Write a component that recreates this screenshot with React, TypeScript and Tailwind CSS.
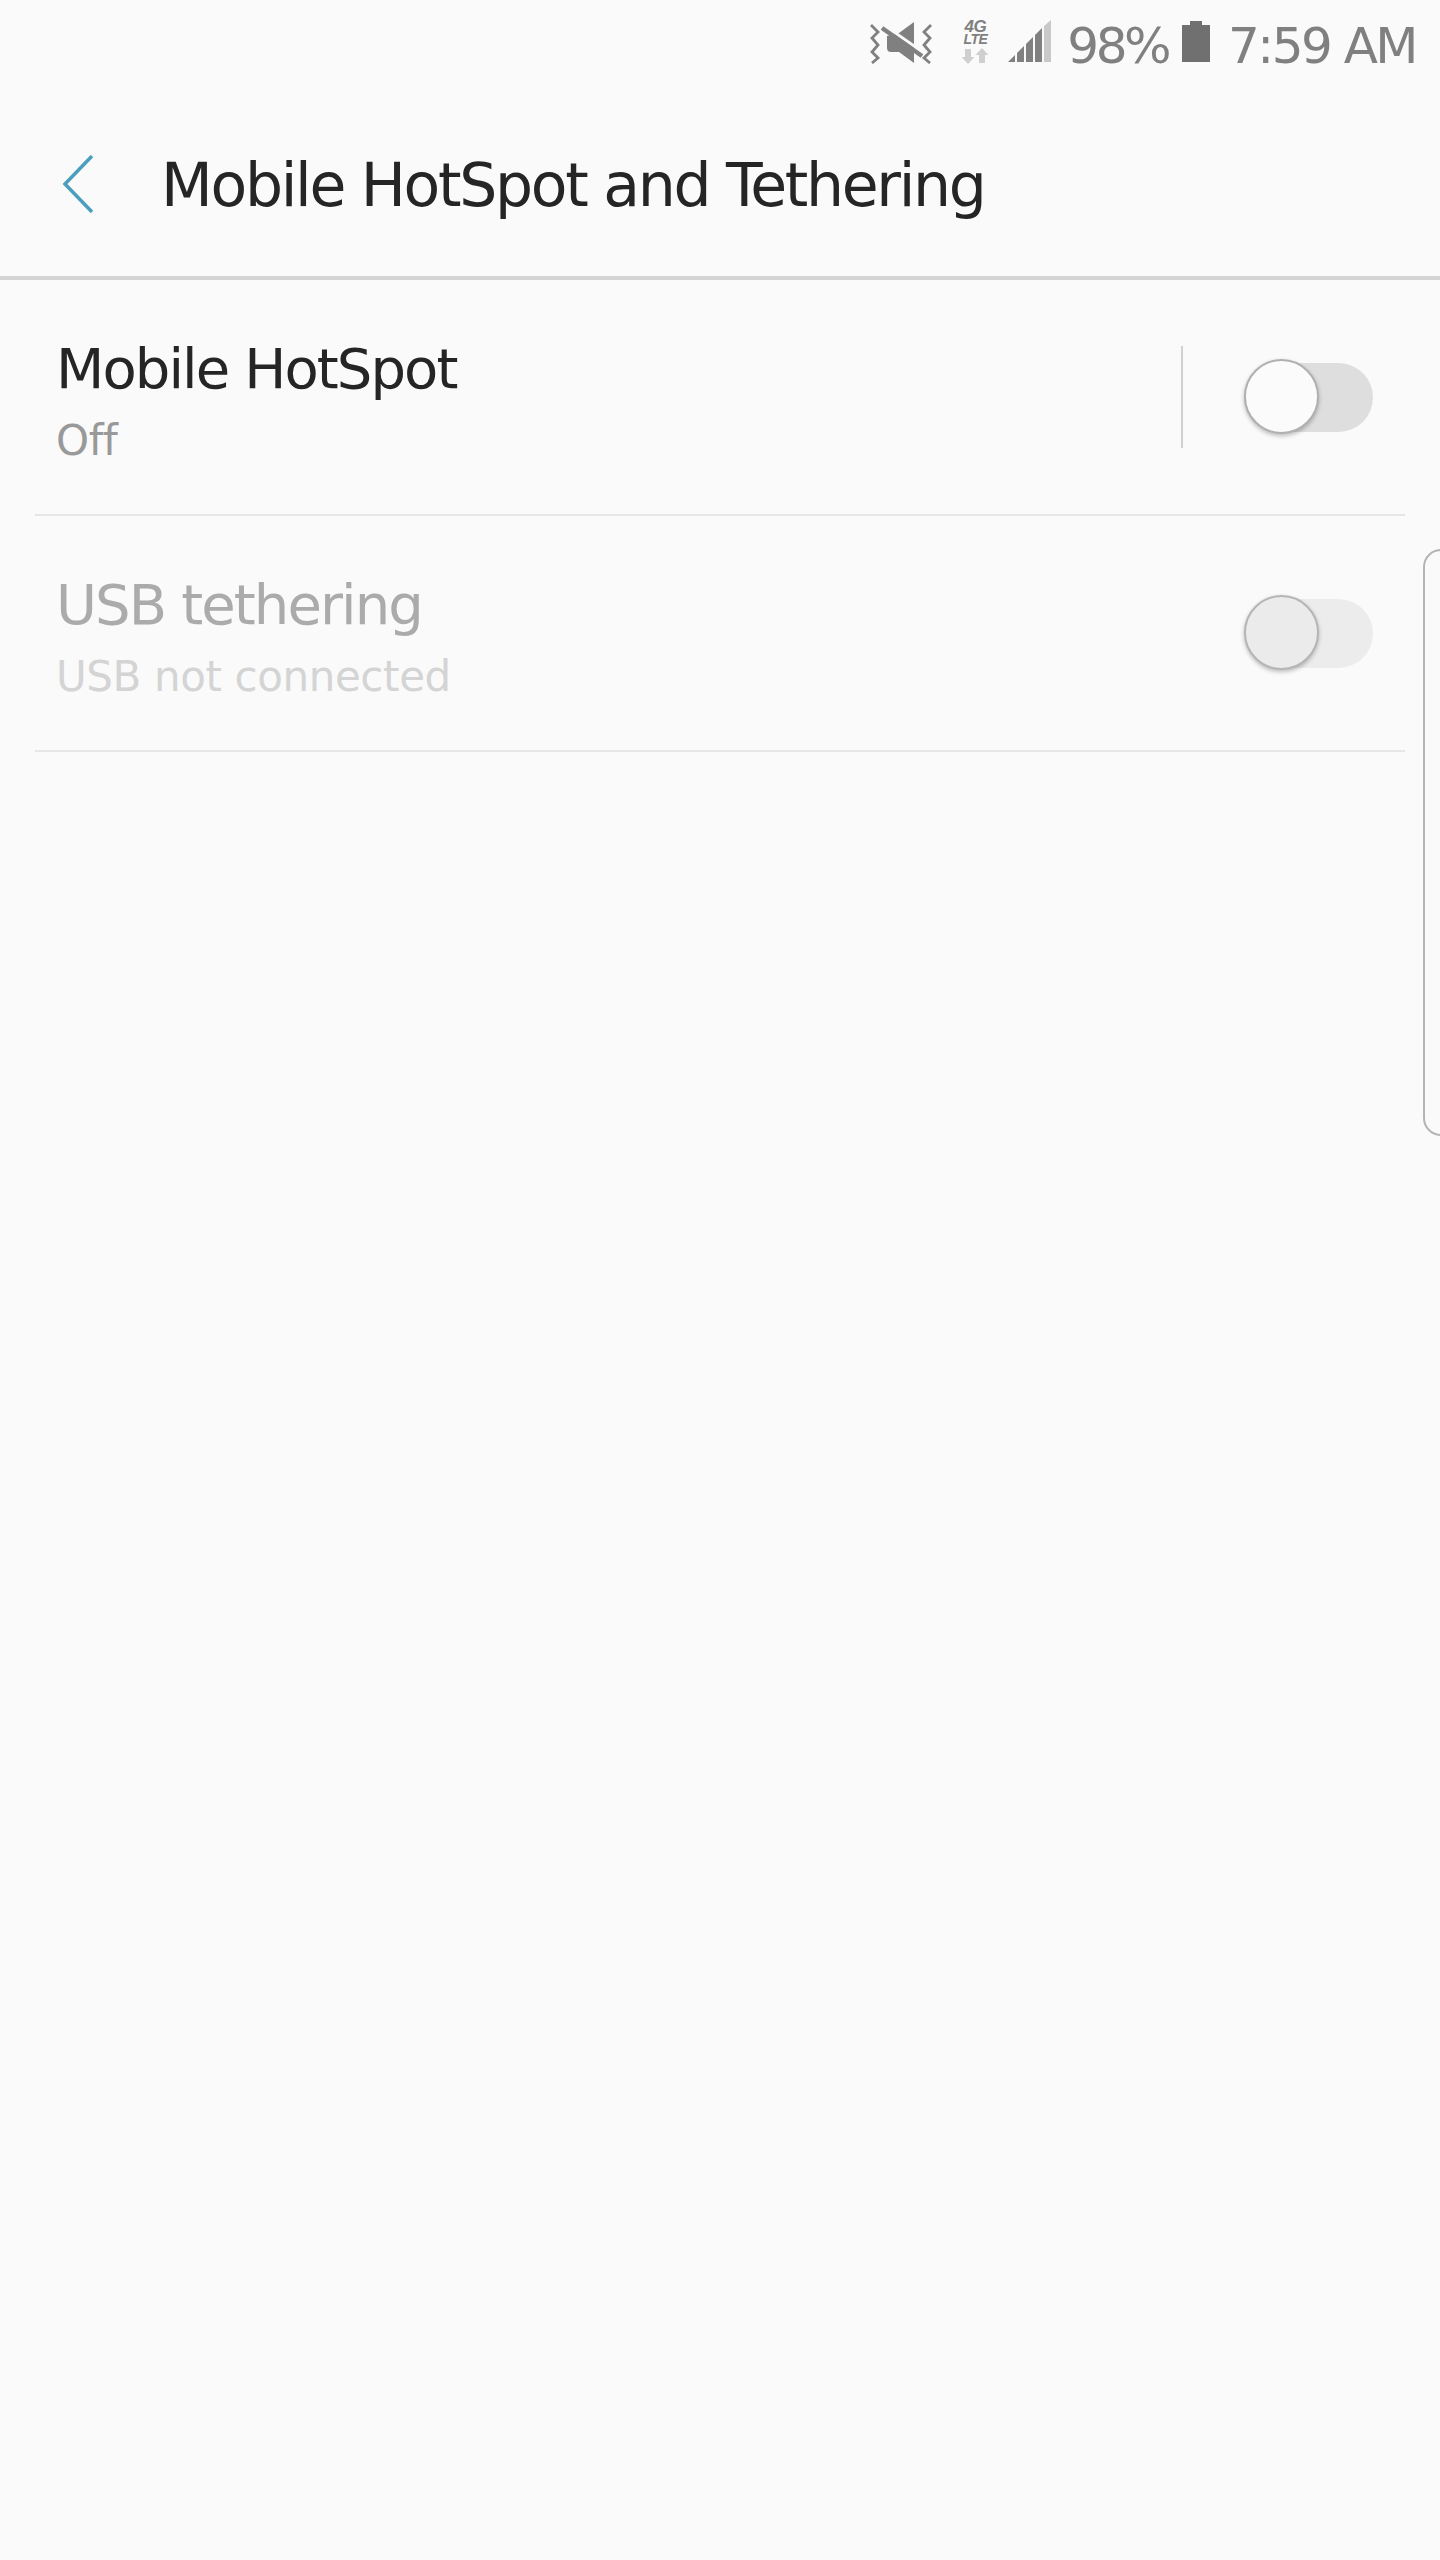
const FONT = "font-['DejaVu_Sans',sans-serif]";

function MuteIcon() {
  return (
    <svg width="64" height="42" viewBox="0 0 64 42" fill="none">
      <path d="M2 3l7 7-6 6 6 7-6 7 6 6-6 5" stroke="#808080" strokeWidth="2.800" />
      <path d="M62 3l-7 7 6 6-6 7 6 7-6 6 6 5" stroke="#808080" strokeWidth="2.800" />
      <path d="M45 0L30 11 18 14v12q0 4 4 4h8l15 11z" fill="#808080" />
      <path d="M15 3l40 28" stroke="#fafafa" strokeWidth="3" />
      <path d="M13 6l40 28" stroke="#808080" strokeWidth="4.500" />
    </svg>
  );
}

function NetworkIcon() {
  return (
    <div className="flex flex-col items-center w-[26px] h-[44px]">
      <span className="text-[#808080] font-['Liberation_Sans',sans-serif] font-bold italic text-[17px] leading-[12px] tracking-[-0.5px]">4G</span>
      <span className="text-[#808080] font-['Liberation_Sans',sans-serif] font-bold italic text-[14px] leading-[11px] mt-[1px] tracking-[-0.5px]">LTE</span>
      <svg className="mt-[3px]" width="26" height="17" viewBox="0 0 26 17">
        <path d="M3 1h6v8h3.500L6 16-.5 9H3z" fill="#cfcfcf" />
        <path d="M17 15h6V7h3.500L20 0l-6.500 7H17z" fill="#cfcfcf" />
      </svg>
    </div>
  );
}

function SignalIcon() {
  return (
    <svg width="43" height="42" viewBox="0 0 43 42">
      <path d="M0 42l7-7v7z" fill="#808080" />
      <path d="M9 33l7-7v16H9z" fill="#808080" />
      <path d="M18 24l7-7v25h-7z" fill="#808080" />
      <path d="M27 15l7-7v34h-7z" fill="#808080" />
      <path d="M36 6l7-6v42h-7z" fill="#c9c9c9" />
    </svg>
  );
}

function Toggle({ disabled }: { disabled?: boolean }) {
  return (
    <div className={`relative w-[129px] h-[69px] ml-[1px] rounded-full ${disabled ? 'bg-[#ececec]' : 'bg-[#dedede]'}`}>
      <div
        className={`absolute left-0 top-[-4px] w-[75px] h-[75px] rounded-full border-2 shadow-[0_2px_4px_rgba(0,0,0,0.25)] ${
          disabled ? 'bg-[#ebebeb] border-[#b5b5b5]' : 'bg-[#fbfbfb] border-[#b0b0b0]'
        }`}
      />
    </div>
  );
}

function Row({ title, sub, disabled, divider }: { title: string; sub: string; disabled?: boolean; divider?: boolean }) {
  return (
    <div className="h-[236px] mx-[35px] border-b-2 border-[#e6e6e6] flex items-center pl-[21px] pr-[32px]">
      <div className="flex-1 pt-[11px] pb-[2px]">
        <div className={`text-[56px] leading-[64px] tracking-[-1.9px] ${disabled ? 'text-[#ababab]' : 'text-[#252525]'}`}>{title}</div>
        <div className={`text-[42px] leading-[50px] mt-[15px] tracking-[-0.4px] ${disabled ? 'text-[#d4d4d4]' : 'text-[#999999]'}`}>{sub}</div>
      </div>
      {divider && <div className="w-[2px] h-[102px] bg-[#d0d0d0] mr-[60px]" />}
      <Toggle disabled={disabled} />
    </div>
  );
}

export default function App() {
  return (
    <div className={`relative w-[1440px] h-[2560px] overflow-hidden bg-[#fafafa] ${FONT}`}>
      <div className="h-[88px] flex items-start justify-end pt-[20px] pr-[24px] text-[#808080]">
        <div className="mt-[2px] mr-[29px]"><MuteIcon /></div>
        <div className="mt-[1px] mr-[20px]"><NetworkIcon /></div>
        <div className="mr-[16px]"><SignalIcon /></div>
        <span className="text-[50px] leading-[52px] mr-[14px] tracking-[-3.5px]">98%</span>
        <svg className="mt-[1px] mr-[18px]" width="28" height="41" viewBox="0 0 28 41">
          <path d="M0 4h8V0h12v4h8v37H0z" fill="#707070" />
        </svg>
        <span className="text-[50px] leading-[52px] tracking-[-2.500px]">7:59 AM</span>
      </div>

      <div className="h-[192px] border-b-4 border-[#d4d4d4] flex items-center pl-[62px] pt-[3px]">
        <svg width="32" height="58" viewBox="0 0 32 58" fill="none">
          <path d="M30 1L3 29l27 28" stroke="#4a9fbf" strokeWidth="3.500" />
        </svg>
        <h1 className="ml-[67px] mt-[2px] text-[60px] leading-[72px] tracking-[-2.300px] text-[#252525] font-normal">
          Mobile HotSpot and Tethering
        </h1>
      </div>

      <Row title="Mobile HotSpot" sub="Off" divider />
      <Row title="USB tethering" sub="USB not connected" disabled />

      {/* edge panel handle */}
      <div className="absolute left-[1423px] top-[549px] w-[30px] h-[587px] rounded-l-[18px] border-2 border-[#b4b4b4]" />
    </div>
  );
}
